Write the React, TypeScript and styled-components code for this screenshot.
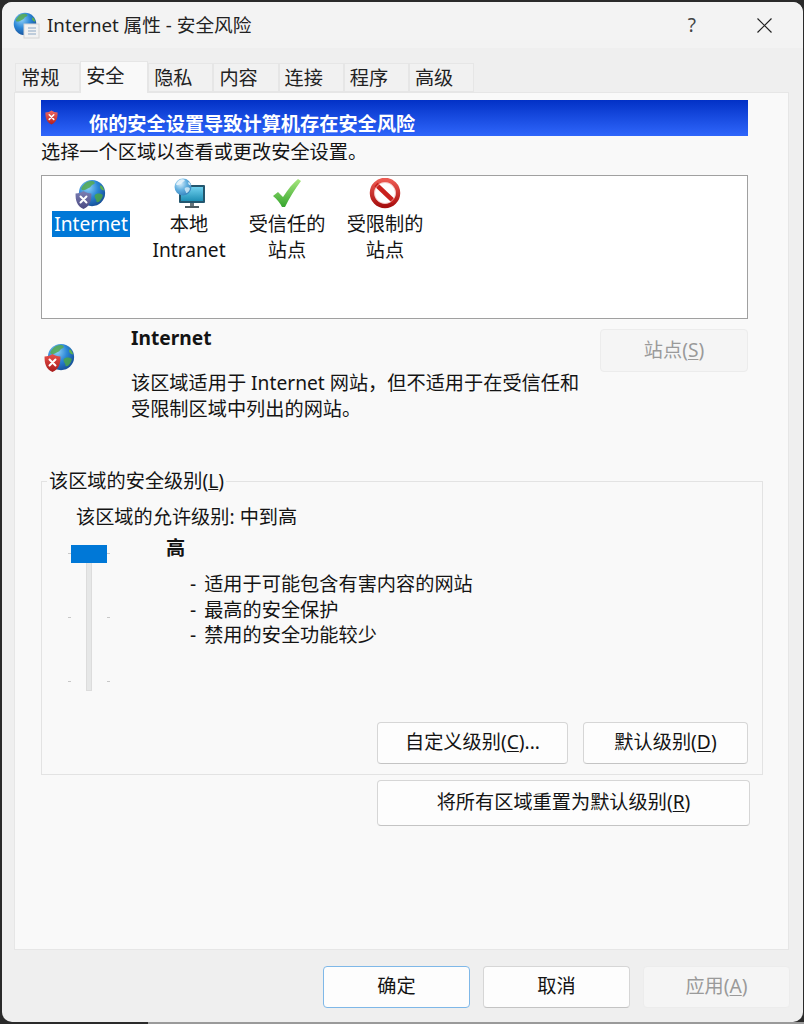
import React from "react";
import styled, { createGlobalStyle } from "styled-components";

const GlobalStyle = createGlobalStyle`
    html, body {
        margin: 0;
        padding: 0;
        background: #2a2a2a;
    }
    body {
        font-family: "Noto Sans", "Noto Sans CJK SC", sans-serif;
        font-size: 19.2px;
        color: #141414;
    }
`;

const TABS = ["常规", "安全", "隐私", "内容", "连接", "程序", "高级"];

function GlobeBase({ id, x = 0, y = 0, size = 32, light }: { id: string; x?: number; y?: number; size?: number; light?: boolean }) {
    return (
        <svg x={x} y={y} width={size} height={size} viewBox="0 0 32 32">
            <defs>
                <radialGradient id={id} cx="0.35" cy="0.3" r="0.85">
                    <stop offset="0" stopColor={light ? "#d5eefb" : "#8fd0f7"} />
                    <stop offset="0.45" stopColor={light ? "#63b0e0" : "#2b86d6"} />
                    <stop offset="1" stopColor={light ? "#2a78b4" : "#113f86"} />
                </radialGradient>
            </defs>
            <circle cx="16" cy="16" r="15" fill={`url(#${id})`} />
            <path
                d="M11 3c3-1 7-1 8 1s-3 2-4 4-4 3-6 4-4 1-5 0 1-4 3-6 2-2 4-3z"
                fill={light ? "#e9f5fb" : "#55a94f"}
                opacity="0.85"
            />
            <path
                d="M21 17c3-1 6 0 7 1s-1 5-3 7-4 2-4 0-2-3-2-5 0-2 2-3z"
                fill={light ? "#d4ebf7" : "#4aa548"}
                opacity="0.85"
            />
            <path d="M26 7c2 1 3 3 4 6-2 0-3-1-4-2s-1-3 0-4z" fill={light ? "#d4ebf7" : "#5cb04f"} />
        </svg>
    );
}

function ShieldBadge({ x, y, w, h, top, bottom, id }: { x: number; y: number; w: number; h: number; top: string; bottom: string; id: string }) {
    return (
        <svg x={x} y={y} width={w} height={h} viewBox="0 0 16 18">
            <defs>
                <linearGradient id={id} x1="0" y1="0" x2="0" y2="1">
                    <stop offset="0" stopColor={top} />
                    <stop offset="1" stopColor={bottom} />
                </linearGradient>
            </defs>
            <path d="M8 0.5c2 1.6 4.5 2.3 7.5 2.3 0 6.5-1 11.5-7.5 14.7C1.5 14.3 0.5 9.300 0.5 2.800 3.500 2.800 6 2.100 8 0.500z" fill={`url(#${id})`} />
            <path d="M5.200 5.700l5.600 5.600M10.800 5.700l-5.600 5.600" stroke="#fff" strokeWidth="1.900" strokeLinecap="round" />
        </svg>
    );
}

function InternetIcon() {
    return (
        <svg width="32" height="32" viewBox="0 0 32 32">
            <GlobeBase id="zoneGlobe" x={3} y={1} size={28} />
            <ShieldBadge id="zoneShield" x={0} y={12} w={17} h={20} top="#7b7fb4" bottom="#4c4a82" />
        </svg>
    );
}

function IntranetIcon() {
    return (
        <svg width="32" height="32" viewBox="0 0 32 32">
            <defs>
                <linearGradient id="screenFill" x1="0" y1="0" x2="0" y2="1">
                    <stop offset="0" stopColor="#6fd0ee" />
                    <stop offset="1" stopColor="#1f8fb5" />
                </linearGradient>
            </defs>
            <rect x="6" y="7" width="26" height="18" rx="1" fill="#23566e" />
            <rect x="8" y="9" width="22" height="14" fill="url(#screenFill)" />
            <rect x="17" y="25" width="4" height="3" fill="#66757c" />
            <rect x="12" y="28" width="14" height="2" fill="#4c5a60" />
            <GlobeBase id="intranetGlobe" x={1} y={0} size={18} light />
        </svg>
    );
}

function TrustedIcon() {
    return (
        <svg width="32" height="32" viewBox="0 0 32 32">
            <defs>
                <linearGradient id="checkFill" x1="0" y1="0" x2="0" y2="1">
                    <stop offset="0" stopColor="#a6e67c" />
                    <stop offset="1" stopColor="#35a52e" />
                </linearGradient>
            </defs>
            <path d="M2 18l5-4 5 5C17 11 22 5 27 1l3 2C24 11 19 19 14 29h-3C9 25 6 21 2 18z" fill="url(#checkFill)" />
        </svg>
    );
}

function RestrictedIcon() {
    return (
        <svg width="32" height="32" viewBox="0 0 32 32">
            <defs>
                <linearGradient id="stopFill" x1="0" y1="0" x2="0" y2="1">
                    <stop offset="0" stopColor="#ec5a52" />
                    <stop offset="1" stopColor="#a80f0f" />
                </linearGradient>
            </defs>
            <circle cx="16" cy="15" r="13" fill="none" stroke="url(#stopFill)" strokeWidth="4.500" />
            <path d="M7 6.500l18 17" stroke="#c9211d" strokeWidth="4.500" />
            <circle cx="16" cy="15" r="10.500" fill="none" stroke="#f4b8b4" strokeWidth="0.700" />
        </svg>
    );
}

function InfoIcon() {
    return (
        <svg width="32" height="32" viewBox="0 0 32 32">
            <GlobeBase id="infoGlobe" x={3} y={0} size={28} />
            <ShieldBadge id="infoShield" x={0} y={10} w={17} h={20} top="#e8504a" bottom="#a91c1c" />
        </svg>
    );
}

function TitleIcon() {
    return (
        <svg width="27" height="27" viewBox="0 0 27 27">
            <GlobeBase id="titleGlobe" x={0} y={0} size={24} />
            <rect x="11" y="12" width="15" height="14" fill="#f2f2f2" stroke="#d4d4d4" />
            <path d="M15 16h8M15 19h8M15 22h8" stroke="#8aa6c4" strokeWidth="1" />
        </svg>
    );
}

function CloseIcon() {
    return (
        <svg width="15" height="15" viewBox="0 0 15 15">
            <path d="M0.500 0.500l14 14M14.500 0.500l-14 14" stroke="#222" strokeWidth="1.200" fill="none" />
        </svg>
    );
}

function BannerShield() {
    return (
        <svg width="13" height="15" viewBox="0 0 13 15">
            <ShieldBadge id="bannerShield" x={0} y={0} w={13} h={15} top="#ef6a63" bottom="#b31f1f" />
        </svg>
    );
}

export default function App(): React.ReactElement {
    return (
        <>
            <GlobalStyle />
            <Desktop>
                <Window>
                    <TitleBar>
                        <TitleGroup>
                            <TitleIcon />
                            <TitleText>Internet 属性 - 安全风险</TitleText>
                        </TitleGroup>
                        <TitleControls>
                            <HelpGlyph>?</HelpGlyph>
                            <CloseIcon />
                        </TitleControls>
                    </TitleBar>

                    <TabStrip>
                        {TABS.map((t, i) => (
                            <Tab key={t} $active={i === 1}>
                                {t}
                            </Tab>
                        ))}
                    </TabStrip>

                    <Panel>
                        <Banner>
                            <BannerIconSlot>
                                <BannerShield />
                            </BannerIconSlot>
                            <BannerText>你的安全设置导致计算机存在安全风险</BannerText>
                        </Banner>
                        <Prompt>选择一个区域以查看或更改安全设置。</Prompt>

                        <ZoneList>
                            <Zone>
                                <InternetIcon />
                                <ZoneLabel $selected>Internet</ZoneLabel>
                            </Zone>
                            <Zone>
                                <IntranetIcon />
                                <ZoneLabel>
                                    本地
                                    <br />
                                    Intranet
                                </ZoneLabel>
                            </Zone>
                            <Zone>
                                <TrustedIcon />
                                <ZoneLabel>
                                    受信任的
                                    <br />
                                    站点
                                </ZoneLabel>
                            </Zone>
                            <Zone>
                                <RestrictedIcon />
                                <ZoneLabel>
                                    受限制的
                                    <br />
                                    站点
                                </ZoneLabel>
                            </Zone>
                        </ZoneList>

                        <InfoRow>
                            <InfoIconSlot>
                                <InfoIcon />
                            </InfoIconSlot>
                            <InfoBody>
                                <InfoTitle>Internet</InfoTitle>
                                <InfoText>
                                    该区域适用于 Internet 网站，但不适用于在受信任和
                                    <br />
                                    受限制区域中列出的网站。
                                </InfoText>
                            </InfoBody>
                            <SitesButton disabled>
                                站点(<u>S</u>)
                            </SitesButton>
                        </InfoRow>

                        <Group>
                            <GroupLegend>
                                该区域的安全级别(<u>L</u>)
                            </GroupLegend>
                            <AllowedLevel>该区域的允许级别: 中到高</AllowedLevel>
                            <LevelRow>
                                <Slider>
                                    <TickColumn>
                                        <TickRow />
                                        <TickRow />
                                        <TickRow />
                                    </TickColumn>
                                    <SliderTrack />
                                    <SliderThumb />
                                </Slider>
                                <LevelBody>
                                    <LevelName>高</LevelName>
                                    <LevelPoints>
                                        <li>- 适用于可能包含有害内容的网站</li>
                                        <li>- 最高的安全保护</li>
                                        <li>- 禁用的安全功能较少</li>
                                    </LevelPoints>
                                </LevelBody>
                            </LevelRow>
                            <GroupActions>
                                <DialogButton $width={191}>
                                    自定义级别(<u>C</u>)...
                                </DialogButton>
                                <DialogButton $width={165}>
                                    默认级别(<u>D</u>)
                                </DialogButton>
                            </GroupActions>
                        </Group>

                        <ResetRow>
                            <ResetButton>
                                将所有区域重置为默认级别(<u>R</u>)
                            </ResetButton>
                        </ResetRow>
                    </Panel>

                    <Footer>
                        <FooterButton $primary>确定</FooterButton>
                        <FooterButton>取消</FooterButton>
                        <FooterButton disabled>
                            应用(<u>A</u>)
                        </FooterButton>
                    </Footer>
                </Window>
            </Desktop>
        </>
    );
}

const Desktop = styled.div`
    width: 804px;
    height: 1024px;
    box-sizing: border-box;
    padding: 2px 1px 2px 2px;
    overflow: hidden;
    background: #2a2a2a linear-gradient(90deg, #2a2a2a 148px, #9a9a9a 148px) no-repeat bottom / 100% 2px;
`;

const Window = styled.div`
    height: 1020px;
    border-radius: 10px;
    background: #efefef;
    overflow: hidden;
    display: flex;
    flex-direction: column;
`;

const TitleBar = styled.div`
    height: 46px;
    flex: none;
    display: flex;
    align-items: center;
    justify-content: space-between;
    padding: 0 31px 0 11px;
    background: #f3f3f3;
`;

const TitleGroup = styled.div`
    display: flex;
    align-items: center;
    gap: 7px;
`;

const TitleText = styled.span`
    color: #222;
    line-height: 26px;
    font-size: 18.700px;
`;

const TitleControls = styled.div`
    display: flex;
    align-items: center;
    gap: 61px;
`;

const HelpGlyph = styled.span`
    color: #444;
    font-size: 19px;
`;

const TabStrip = styled.div`
    height: 44px;
    flex: none;
    box-sizing: border-box;
    display: flex;
    align-items: flex-end;
    padding-left: 13px;
    position: relative;
    z-index: 1;
`;

const Tab = styled.div<{ $active?: boolean }>`
    box-sizing: border-box;
    width: ${(p) => (p.$active ? "68px" : "65.200px")};
    height: ${(p) => (p.$active ? "32px" : "29px")};
    margin-bottom: ${(p) => (p.$active ? "-1px" : "0")};
    padding-left: 5px;
    line-height: 28px;
    color: #222;
    background: ${(p) => (p.$active ? "#f9f9f9" : "#f1f1f1")};
    border: 1px solid #e6e6e6;
    border-bottom: ${(p) => (p.$active ? "none" : "1px solid #e6e6e6")};
`;

const Panel = styled.div`
    margin-left: 12px;
    width: 775px;
    height: 858px;
    flex: none;
    box-sizing: border-box;
    padding: 7px 0 0 26px;
    background: #f9f9f9;
    border: 1px solid #e6e6e6;
`;

const Banner = styled.div`
    width: 707px;
    height: 36px;
    box-sizing: border-box;
    display: flex;
    background: linear-gradient(180deg, #0231c6, #2f66fb);
`;

const BannerIconSlot = styled.div`
    width: 48px;
    display: flex;
    align-items: flex-start;
    padding: 10px 0 0 4px;
    box-sizing: border-box;
`;

const BannerText = styled.div`
    color: #fff;
    font-weight: 700;
    line-height: 26px;
    margin-top: 11px;
`;

const Prompt = styled.div`
    line-height: 26px;
    margin: 3px 0 10px;
`;

const ZoneList = styled.div`
    width: 707px;
    height: 144px;
    box-sizing: border-box;
    background: #fff;
    border: 1px solid #a0a0a0;
    display: flex;
    align-items: flex-start;
    padding-top: 2px;
`;

const Zone = styled.div`
    width: 98px;
    display: flex;
    flex-direction: column;
    align-items: center;
    text-align: center;
    gap: 1px;
`;

const ZoneLabel = styled.div<{ $selected?: boolean }>`
    line-height: 26px;
    padding: 0 2px;
    color: ${(p) => (p.$selected ? "#fff" : "#141414")};
    background: ${(p) => (p.$selected ? "#0078d7" : "transparent")};
`;

const InfoRow = styled.div`
    width: 707px;
    height: 149px;
    display: flex;
    align-items: flex-start;
`;

const InfoIconSlot = styled.div`
    width: 90px;
    flex: none;
    display: flex;
    padding: 24px 0 0 3px;
    box-sizing: border-box;
`;

const InfoBody = styled.div`
    flex: 1;
    padding-top: 6px;
`;

const InfoTitle = styled.div`
    font-weight: 700;
    line-height: 26px;
`;

const InfoText = styled.div`
    line-height: 26px;
    margin-top: 19px;
`;

const Group = styled.fieldset`
    width: 722px;
    height: 307px;
    box-sizing: border-box;
    margin: 0;
    padding: 0;
    border: 1px solid #e3e3e3;
    display: flex;
    flex-direction: column;
`;

const GroupLegend = styled.legend`
    margin-left: 5px;
    padding: 0 2px;
    line-height: 26px;
`;

const AllowedLevel = styled.div`
    line-height: 26px;
    margin: 10px 0 0 34px;
`;

const LevelRow = styled.div`
    display: flex;
    align-items: flex-start;
    margin-top: 15px;
`;

const Slider = styled.div`
    position: relative;
    width: 42px;
    height: 146px;
    margin-left: 26px;
    flex: none;
`;

const TickColumn = styled.div`
    position: absolute;
    left: 0;
    right: 0;
    top: 8px;
    bottom: 9px;
    display: flex;
    flex-direction: column;
    justify-content: space-between;
`;

const TickRow = styled.div`
    height: 1px;
    background: linear-gradient(90deg, #c8c8c8 3px, transparent 3px, transparent calc(100% - 3px), #c8c8c8 calc(100% - 3px));
`;

const SliderTrack = styled.div`
    position: absolute;
    left: 18px;
    top: 14px;
    bottom: 0;
    width: 6px;
    background: #e6e7e7;
    border: 1px solid #dcdcdc;
    box-sizing: border-box;
`;

const SliderThumb = styled.div`
    position: absolute;
    left: 3px;
    top: 0;
    width: 36px;
    height: 18px;
    background: #0078d7;
`;

const LevelBody = styled.div`
    margin-left: 56px;
`;

const LevelName = styled.div`
    font-weight: 700;
    line-height: 26px;
    margin-top: -10px;
`;

const LevelPoints = styled.ul`
    list-style: none;
    margin: 10px 0 0 24px;
    padding: 0;
    line-height: 25.500px;
    word-spacing: 3px;
`;

const GroupActions = styled.div`
    margin-top: auto;
    margin-bottom: 10px;
    display: flex;
    justify-content: flex-end;
    gap: 15px;
    padding-right: 14px;
`;

const ButtonBase = styled.button`
    box-sizing: border-box;
    font: inherit;
    line-height: 26px;
    padding: 0 0 2px;
    color: #141414;
    background: #fdfdfd;
    border: 1px solid #d6d6d6;
    border-bottom-color: #c4c4c4;
    border-radius: 4px;
    u {
        text-underline-offset: 2px;
    }
    &:disabled {
        color: #9a9a9a;
        background: #f5f5f5;
        border-color: #ececec;
    }
`;

const DialogButton = styled(ButtonBase)<{ $width: number }>`
    width: ${(p) => p.$width}px;
    height: 42px;
`;

const SitesButton = styled(ButtonBase)`
    width: 148px;
    height: 43px;
    flex: none;
    margin-top: 10px;
`;

const ResetRow = styled.div`
    width: 709px;
    display: flex;
    justify-content: flex-end;
    margin-top: 5px;
`;

const ResetButton = styled(ButtonBase)`
    width: 373px;
    height: 46px;
`;

const Footer = styled.div`
    flex: 1;
    display: flex;
    justify-content: flex-end;
    align-items: flex-start;
    gap: 13px;
    padding: 16px 13px 0 0;
`;

const FooterButton = styled(ButtonBase)<{ $primary?: boolean }>`
    width: 147px;
    height: 42px;
    ${(p) => p.$primary && "border: 1.500px solid #7fb8e8;"}
`;
